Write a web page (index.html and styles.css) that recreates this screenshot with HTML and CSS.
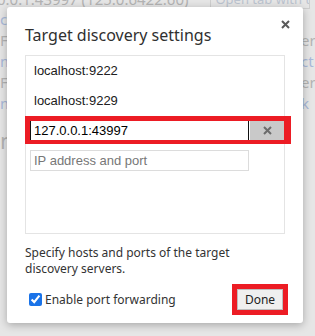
FILE: index.html
```html
<!DOCTYPE html>
<html lang="en">
<head>
  <meta charset="UTF-8">
  <meta name="viewport" content="width=device-width, initial-scale=1.0">
  <title>Target discovery settings</title>
  <link rel="stylesheet" href="styles.css">
</head>
<body>
  <div class="page">
    <div class="page-head">
      <span class="page-target">0.0.1:43997 (125.0.6422.60)</span>
      <span class="page-open">Open tab with url</span>
    </div>
    <div class="page-row"><span class="link">c</span><span></span></div>
    <div class="page-row"><span>F</span><span>er</span></div>
    <div class="page-row"><span class="link">m</span><span class="link">ct f</span></div>
    <div class="page-row"><span>F</span><span>er</span></div>
    <div class="page-row"><span class="link">m</span><span class="link">k</span></div>
    <div class="page-row big"><span>n</span><span></span></div>
  </div>

  <div class="dialog">
    <button class="dialog-close" aria-label="Close">
      <svg width="9" height="9" viewBox="0 0 9 9"><path d="M1 1L8 8M8 1L1 8" stroke="#5a5a5a" stroke-width="2"/></svg>
    </button>
    <div class="dialog-title">Target discovery settings</div>

    <div class="host-list">
      <div class="host-item">localhost:9222</div>
      <div class="host-item">localhost:9229</div>
      <div class="host-item editing">
        <input class="host-input active" type="text" value="127.0.0.1:43997">
        <button class="host-remove" aria-label="Remove">
          <svg width="9" height="9" viewBox="0 0 9 9"><path d="M1 1L8 8M8 1L1 8" stroke="#6b6b6b" stroke-width="2"/></svg>
        </button>
        <div class="highlight"></div>
      </div>
      <div class="host-new">
        <input class="host-input" type="text" placeholder="IP address and port">
      </div>
    </div>

    <p class="dialog-note">Specify hosts and ports of the target discovery servers.</p>

    <div class="dialog-footer">
      <label class="forwarding">
        <input type="checkbox" checked>
        <span>Enable port forwarding</span>
      </label>
      <span class="done-mark"><button class="done">Done</button></span>
    </div>
  </div>
</body>
</html>
```

FILE: styles.css
```css
* {
  margin: 0;
  padding: 0;
  box-sizing: border-box;
}

body, html {
  height: 100%;
  overflow: hidden;
}

body {
  background: #e6e6e6;
  font-family: "Noto Sans", "DejaVu Sans", sans-serif;
  position: relative;
}

/* page behind the dialog */
.page {
  color: #b4b4b4;
  font-size: 15px;
}

.page-head {
  display: flex;
  align-items: flex-end;
  height: 18px;
  margin-top: -9px;
  white-space: nowrap;
}

.page-target {
  margin-left: -3px;
}

.page-open {
  margin-left: 22px;
  width: 100px;
  border: 1px solid #cfcfcf;
  font-size: 13px;
  padding: 0 4px;
  color: #bcc4d0;
  overflow: hidden;
}

.page-row {
  display: flex;
  justify-content: space-between;
  height: 21px;
  line-height: 21px;
}

.page-row span:last-child {
  width: 14px;
  overflow: hidden;
  white-space: nowrap;
}

.page-row .link {
  color: #a9b9d9;
}

.page-row.big {
  margin-top: 16px;
  font-size: 22px;
  height: 30px;
}

/* dialog */
.dialog {
  position: absolute;
  top: 7px;
  left: 7px;
  width: 296px;
  height: 316px;
  background: #fff;
  border-radius: 3px;
  box-shadow: 0 2px 8px rgba(0, 0, 0, 0.28);
  padding: 16px 18px 8px 18px;
  color: #333;
}

.dialog-close {
  position: absolute;
  top: 9px;
  right: 10px;
  width: 16px;
  height: 16px;
  border: none;
  background: none;
  display: flex;
  align-items: center;
  justify-content: center;
}

.dialog-title {
  font-size: 16px;
  line-height: 24px;
  margin-bottom: 8px;
  color: #303030;
}

.host-list {
  border: 1px solid #e4e4e4;
  height: 179px;
  font-family: "Liberation Sans", Arial, sans-serif;
  font-size: 13px;
  color: #202020;
}

.host-item {
  height: 30px;
  line-height: 30px;
  padding-left: 8px;
}

.host-item.editing {
  position: relative;
  display: flex;
  align-items: center;
  gap: 1px;
  padding-left: 4px;
}

.host-input {
  width: 219px;
  height: 22px;
  border: 1px solid #dcdcdc;
  font-family: "Liberation Sans", Arial, sans-serif;
  font-size: 13px;
  padding: 0 3px;
  color: #000;
  outline: none;
}

.host-input::placeholder {
  color: #777;
}

.host-input.active {
  border: 1px solid #111;
  margin-top: -2px;
}

.host-remove {
  width: 34px;
  height: 22px;
  margin-top: -2px;
  border: none;
  background: #c9c9c9;
  display: flex;
  align-items: center;
  justify-content: center;
}

.highlight {
  position: absolute;
  left: -1px;
  top: 0;
  width: 266px;
  height: 28px;
  border-style: solid;
  border-color: #ec1c24;
  border-width: 5px 7px 4px 5px;
}

.host-new {
  padding: 4px 0 0 4px;
}

.host-new .host-input {
  height: 21px;
}

.dialog-note {
  margin-top: 11px;
  font-size: 12px;
  line-height: 16px;
  color: #333;
}

.dialog-footer {
  display: flex;
  justify-content: space-between;
  align-items: center;
  margin-top: 7px;
  margin-right: -3px;
  height: 31px;
}

.forwarding {
  display: flex;
  align-items: center;
  font-size: 12px;
  color: #333;
}

.forwarding input {
  width: 13px;
  height: 13px;
  margin: 0 3px 0 4px;
  accent-color: #1a73e8;
}

.done-mark {
  border: 5px solid #ec1c24;
  display: flex;
}

.done {
  width: 46px;
  height: 21px;
  border: 1px solid #bdbdbd;
  background: #efefef;
  font-family: "Noto Sans", "DejaVu Sans", sans-serif;
  font-size: 12px;
  color: #222;
}
```
